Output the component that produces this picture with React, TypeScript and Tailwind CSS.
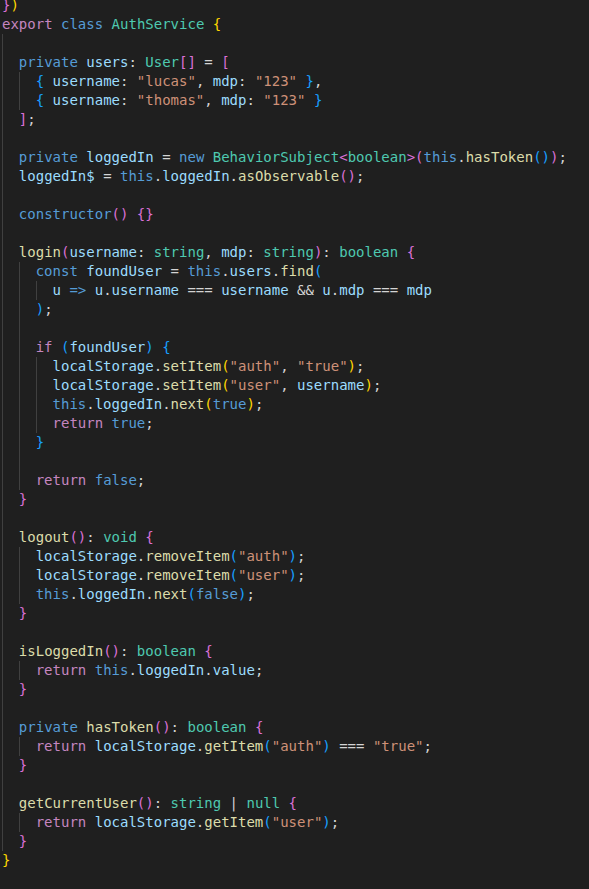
type Tok = [string, string];

const kw = "text-[#569cd6]";
const ctrl = "text-[#c586c0]";
const ty = "text-[#4ec9b0]";
const v = "text-[#9cdcfe]";
const fn = "text-[#dcdcaa]";
const s = "text-[#ce9178]";
const p = "text-[#d4d4d4]";
const b1 = "text-[#ffd700]";
const b2 = "text-[#da70d6]";
const b3 = "text-[#179fff]";

// [indent level, tokens]
const lines: [number, Tok[]][] = [
  [0, [["}", b2], [")", b1]]],
  [0, [["export", ctrl], [" ", p], ["class", kw], [" ", p], ["AuthService", ty], [" ", p], ["{", b1]]],
  [1, []],
  [1, [["private", kw], [" ", p], ["users", v], [": ", p], ["User", ty], ["[]", b2], [" = ", p], ["[", b2]]],
  [2, [["{", b3], [" ", p], ["username", v], [": ", p], ['"lucas"', s], [", ", p], ["mdp", v], [": ", p], ['"123"', s], [" ", p], ["}", b3], [",", p]]],
  [2, [["{", b3], [" ", p], ["username", v], [": ", p], ['"thomas"', s], [", ", p], ["mdp", v], [": ", p], ['"123"', s], [" ", p], ["}", b3]]],
  [1, [["]", b2], [";", p]]],
  [1, []],
  [1, [["private", kw], [" ", p], ["loggedIn", v], [" = ", p], ["new", kw], [" ", p], ["BehaviorSubject", ty], ["<", b2], ["boolean", ty], [">", b2], ["(", b2], ["this", kw], [".", p], ["hasToken", fn], ["()", b3], [")", b2], [";", p]]],
  [1, [["loggedIn$", v], [" = ", p], ["this", kw], [".", p], ["loggedIn", v], [".", p], ["asObservable", fn], ["()", b2], [";", p]]],
  [1, []],
  [1, [["constructor", kw], ["()", b2], [" ", p], ["{}", b2]]],
  [1, []],
  [1, [["login", fn], ["(", b2], ["username", v], [": ", p], ["string", ty], [", ", p], ["mdp", v], [": ", p], ["string", ty], [")", b2], [": ", p], ["boolean", ty], [" ", p], ["{", b2]]],
  [2, [["const", kw], [" ", p], ["foundUser", v], [" = ", p], ["this", kw], [".", p], ["users", v], [".", p], ["find", fn], ["(", b3]]],
  [3, [["u", v], [" ", p], ["=>", kw], [" ", p], ["u", v], [".", p], ["username", v], [" === ", p], ["username", v], [" && ", p], ["u", v], [".", p], ["mdp", v], [" === ", p], ["mdp", v]]],
  [2, [[")", b3], [";", p]]],
  [2, []],
  [2, [["if", ctrl], [" ", p], ["(", b3], ["foundUser", v], [")", b3], [" ", p], ["{", b3]]],
  [3, [["localStorage", v], [".", p], ["setItem", fn], ["(", b1], ['"auth"', s], [", ", p], ['"true"', s], [")", b1], [";", p]]],
  [3, [["localStorage", v], [".", p], ["setItem", fn], ["(", b1], ['"user"', s], [", ", p], ["username", v], [")", b1], [";", p]]],
  [3, [["this", kw], [".", p], ["loggedIn", v], [".", p], ["next", fn], ["(", b1], ["true", kw], [")", b1], [";", p]]],
  [3, [["return", ctrl], [" ", p], ["true", kw], [";", p]]],
  [2, [["}", b3]]],
  [2, []],
  [2, [["return", ctrl], [" ", p], ["false", kw], [";", p]]],
  [1, [["}", b2]]],
  [1, []],
  [1, [["logout", fn], ["()", b2], [": ", p], ["void", ty], [" ", p], ["{", b2]]],
  [2, [["localStorage", v], [".", p], ["removeItem", fn], ["(", b3], ['"auth"', s], [")", b3], [";", p]]],
  [2, [["localStorage", v], [".", p], ["removeItem", fn], ["(", b3], ['"user"', s], [")", b3], [";", p]]],
  [2, [["this", kw], [".", p], ["loggedIn", v], [".", p], ["next", fn], ["(", b3], ["false", kw], [")", b3], [";", p]]],
  [1, [["}", b2]]],
  [1, []],
  [1, [["isLoggedIn", fn], ["()", b2], [": ", p], ["boolean", ty], [" ", p], ["{", b2]]],
  [2, [["return", ctrl], [" ", p], ["this", kw], [".", p], ["loggedIn", v], [".", p], ["value", v], [";", p]]],
  [1, [["}", b2]]],
  [1, []],
  [1, [["private", kw], [" ", p], ["hasToken", fn], ["()", b2], [": ", p], ["boolean", ty], [" ", p], ["{", b2]]],
  [2, [["return", ctrl], [" ", p], ["localStorage", v], [".", p], ["getItem", fn], ["(", b3], ['"auth"', s], [")", b3], [" === ", p], ['"true"', s], [";", p]]],
  [1, [["}", b2]]],
  [1, []],
  [1, [["getCurrentUser", fn], ["()", b2], [": ", p], ["string", ty], [" | ", p], ["null", ty], [" ", p], ["{", b2]]],
  [2, [["return", ctrl], [" ", p], ["localStorage", v], [".", p], ["getItem", fn], ["(", b3], ['"user"', s], [")", b3], [";", p]]],
  [1, [["}", b2]]],
  [0, [["}", b1]]],
];

export default function App() {
  return (
    <div className="h-screen w-full overflow-hidden bg-[#1f1f1f] font-['DejaVu_Sans_Mono',monospace] text-[14px] leading-[19px] text-[#d4d4d4]">
      <div className="-mt-1 pl-[2px]">
        {lines.map(([level, toks], i) => (
          <div key={i} className="flex h-[19px] whitespace-pre">
            {Array.from({ length: level }).map((_, g) => (
              <span key={g} className="h-full w-[2ch] shrink-0 border-l border-[#404040]" />
            ))}
            {toks.map(([text, cls], j) => (
              <span key={j} className={cls}>
                {text}
              </span>
            ))}
          </div>
        ))}
      </div>
    </div>
  );
}
